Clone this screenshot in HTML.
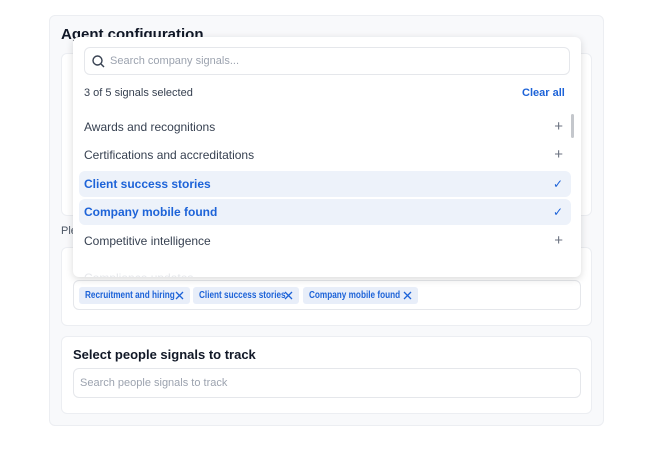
<!DOCTYPE html>
<html><head><style>
*{box-sizing:border-box;margin:0;padding:0}
body{width:670px;height:463px;background:#fff;font-family:"Liberation Sans",sans-serif;position:relative;overflow:hidden;color:#1f2937}
.abs{position:absolute}
.outer{left:49px;top:15px;width:555px;height:411px;background:#f8f9fb;border:1px solid #eceef2;border-radius:6px}
.card{background:#fff;border:1px solid #eceef2;border-radius:6px}
.inp{border:1px solid #e5e7eb;border-radius:6px;background:#fff}
.dd{left:73px;top:37px;width:508px;height:240px;background:#fff;border-radius:6px;box-shadow:0 2px 8px rgba(0,0,0,.15);overflow:hidden}
.row{position:absolute;left:6px;width:492px;height:26px;border-radius:6px;font-size:12px;line-height:26px;padding-left:5px;color:#374151}
.row.sel{background:#edf2fa;color:#1d63d8;font-weight:bold}
.row .ic{position:absolute;right:8px;top:0;font-size:15px;color:#6b7280;font-weight:normal}
.tag{position:absolute;top:287px;height:17px;background:#e8eef9;border-radius:3px;color:#1d63d8;font-size:10px;font-weight:bold;line-height:17px;padding-left:6px;white-space:nowrap;overflow:hidden}
.tag span{display:inline-block;transform:scaleX(.82);transform-origin:left center}
.tag svg{position:absolute;right:6px;top:4px}
</style></head><body>
<div class="abs outer"></div>
<div class="abs" style="left:61px;top:26px;font-size:15px;font-weight:bold;color:#111827">Agent configuration</div>
<div class="abs card" style="left:61px;top:53px;width:531px;height:163px"></div>
<div class="abs" style="left:61px;top:225px;font-size:11px;color:#4b5563">Please</div>
<div class="abs card" style="left:61px;top:247px;width:531px;height:79px"></div>
<div class="abs inp" style="left:73px;top:280px;width:508px;height:30px"></div>
<div class="tag" style="left:79px;width:111px"><span>Recruitment and hiring</span><svg width="9" height="9"><path d="M1 1L8 8M8 1L1 8" stroke="#1d63d8" stroke-width="1.3"/></svg></div>
<div class="tag" style="left:193px;width:106px"><span>Client success stories</span><svg width="9" height="9"><path d="M1 1L8 8M8 1L1 8" stroke="#1d63d8" stroke-width="1.3"/></svg></div>
<div class="tag" style="left:303px;width:115px"><span>Company mobile found</span><svg width="9" height="9"><path d="M1 1L8 8M8 1L1 8" stroke="#1d63d8" stroke-width="1.3"/></svg></div>
<div class="abs card" style="left:61px;top:336px;width:531px;height:78px"></div>
<div class="abs" style="left:73px;top:347px;font-size:13px;font-weight:bold;color:#111827">Select people signals to track</div>
<div class="abs inp" style="left:73px;top:368px;width:508px;height:30px;font-size:11px;color:#9ca3af;line-height:28px;padding-left:6px">Search people signals to track</div>
<div class="abs dd">
 <div class="abs inp" style="left:11px;top:10px;width:486px;height:28px;font-size:11px;color:#9ca3af;line-height:27px;padding-left:25px">
  <svg class="abs" style="left:7px;top:7px" width="13" height="13"><circle cx="5.5" cy="5.5" r="4.5" fill="none" stroke="#374151" stroke-width="1.4"/><path d="M9 9L12 12" stroke="#374151" stroke-width="1.4"/></svg>Search company signals...</div>
 <div class="abs" style="left:11px;top:50px;font-size:11px;color:#374151">3 of 5 signals selected</div>
 <div class="abs" style="left:449px;top:50px;font-size:11px;color:#1d63d8;font-weight:bold">Clear all</div>
 <div class="row" style="top:77px">Awards and recognitions<span class="ic">+</span></div>
 <div class="row" style="top:105px">Certifications and accreditations<span class="ic">+</span></div>
 <div class="row sel" style="top:134px">Client success stories<span class="ic" style="color:#1d63d8;font-size:12px">✓</span></div>
 <div class="row sel" style="top:162px">Company mobile found<span class="ic" style="color:#1d63d8;font-size:12px">✓</span></div>
 <div class="row" style="top:191px">Competitive intelligence<span class="ic">+</span></div>
 <div class="row" style="top:228px;color:#e5e7eb">Compliance updates</div>
 <div class="abs" style="left:498px;top:77px;width:3px;height:24px;background:#c4c7cc;border-radius:2px"></div>
</div>
</body></html>
